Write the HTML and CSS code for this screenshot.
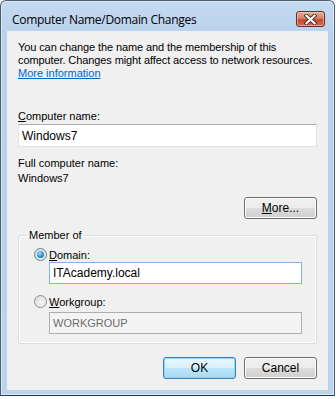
FILE: index.html
```html
<!DOCTYPE html>
<html lang="en">
<head>
    <meta charset="utf-8">
    <title>Computer Name/Domain Changes</title>
    <link rel="stylesheet" href="styles.css">
</head>
<body>
    <div class="window">
        <div class="titlebar">
            <span class="title">Computer Name/Domain Changes</span>
            <span class="close-btn">
                <svg width="13" height="11" viewBox="0 0 13 11">
                    <path d="M2.5 1.8 L10.5 9.2 M10.5 1.8 L2.5 9.2" stroke="#4a2a2a" stroke-width="4" stroke-linecap="square"/>
                    <path d="M2.5 1.8 L10.5 9.2 M10.5 1.8 L2.5 9.2" stroke="#ffffff" stroke-width="2.2" stroke-linecap="square"/>
                </svg>
            </span>
        </div>
        <div class="frame">
            <div class="content">
                <p class="intro">You can change the name and the membership of this<br>computer. Changes might affect access to network resources.<br><a href="#">More information</a></p>

                <label class="field-label" for="computer-name"><u>C</u>omputer name:</label>
                <input type="text" id="computer-name" class="textbox" value="Windows7">

                <div class="static full-name-label">Full computer name:</div>
                <div class="static full-name">Windows7</div>

                <div class="button-row more-row">
                    <button class="btn"><u>M</u>ore...</button>
                </div>

                <fieldset class="group">
                    <legend>Member of</legend>
                    <div class="radio-row domain-row">
                        <span class="radio checked"></span>
                        <span><u>D</u>omain:</span>
                    </div>
                    <input type="text" class="textbox indent focused" value="ITAcademy.local">
                    <div class="radio-row workgroup-row">
                        <span class="radio"></span>
                        <span><u>W</u>orkgroup:</span>
                    </div>
                    <input type="text" class="textbox indent disabled-box" value="WORKGROUP" disabled>
                </fieldset>

                <div class="button-row actions">
                    <button class="btn default">OK</button>
                    <button class="btn">Cancel</button>
                </div>
            </div>
        </div>
    </div>
</body>
</html>
```

FILE: styles.css
```css
/* --- dialog chrome --- */
body {
    margin: 0;
    background: #ffffff;
    font-family: "Liberation Sans", Arial, sans-serif;
    font-size: 11px;
    color: #000000;
}

.window {
    width: 335px;
    height: 396px;
    box-sizing: border-box;
    border: 1px solid #4e5d6c;
    border-radius: 6px 6px 0 0;
    background: linear-gradient(#c4daf1, #b8d0ea 40px, #bcd3eb);
    box-shadow: inset 0 0 0 1px rgba(255, 255, 255, 0.45);
    border-bottom-color: #2a3a48;
}

.titlebar { height: 30px; display: flex; align-items: flex-start; }
.title { font-family: "Open Sans", "Noto Sans", sans-serif; font-size: 12px; letter-spacing: -0.3px; line-height: 16px; margin: 11px 0 0 11px; color: #000; }
.close-btn {
    margin: 10px 9px 0 auto;
    width: 29px; height: 16px;
    box-sizing: border-box;
    border: 1px solid #6b2a22;
    border-radius: 3px;
    background: linear-gradient(#e9a995, #d7816b 45%, #c24a32 55%, #d06f55);
    box-shadow: inset 0 0 0 1px rgba(255, 220, 210, 0.5);
    display: flex; align-items: center; justify-content: center;
}

.frame { padding: 0 6px 5px 6px; }

.content {
    height: 359px;
    box-sizing: border-box;
    background: #f0f0f0;
    padding: 10px 11px 0 11px;
}

/* --- text --- */
.intro { margin: 0; line-height: 13px; white-space: nowrap; letter-spacing: -0.1px; }
.intro a { color: #0066cc; letter-spacing: 0; }

.field-label, .static { display: block; line-height: 13px; }
.field-label { margin-top: 30px; }
.full-name-label { margin-top: 10px; }
.full-name { margin-top: 2px; }

/* --- text boxes --- */
.textbox {
    display: block;
    box-sizing: border-box;
    width: 299px;
    height: 23px;
    margin: 1px 0 0 0;
    padding: 0 3px;
    border: 1px solid #e2e3ea;
    border-top-color: #abadb3;
    background: #ffffff;
    font-family: inherit;
    font-size: 12px;
    color: #000;
    outline: none;
}
.textbox.indent { width: 253px; height: 22px; margin-left: 30px; }
.textbox.focused { border-color: #7eb4ea; }
.disabled-box { margin-top: 4px; border-color: #afafaf; background: #f4f4f4; color: #6d6d6d; font-size: 11px; }

/* --- buttons --- */
.button-row { display: flex; justify-content: flex-end; gap: 8px; }
.more-row { margin-top: 12px; }
.actions { margin-top: 13px; }

.btn {
    width: 73px; height: 22px;
    box-sizing: border-box;
    border: 1px solid #707070;
    border-radius: 3px;
    background: linear-gradient(#f2f2f2, #ebebeb 50%, #dddddd 50%, #cfcfcf);
    box-shadow: inset 0 0 0 1px #fcfcfc;
    font-family: inherit;
    font-size: 12px;
    color: #000;
    padding: 0;
}
.btn.default {
    border-color: #3c7fb1;
    background: linear-gradient(#eaf6fd, #d9f0fc 50%, #bee6fd 50%, #a7d9f5);
    box-shadow: inset 0 0 0 1px #94d5f8;
}

/* --- group box --- */
.group {
    margin: 10px 0 0 0;
    padding: 0 0 9px 0;
    border: 1px solid #d5dfe5;
    border-radius: 3px;
    box-shadow: inset 0 0 0 1px #ffffff;
}
.group legend { margin-left: 8px; padding: 0 2px; line-height: 13px; }

.radio-row { display: flex; align-items: center; gap: 2px; height: 13px; margin-left: 15px; }
.domain-row { margin-top: 6px; }
.workgroup-row { margin-top: 11px; }

.radio {
    width: 13px; height: 13px;
    box-sizing: border-box;
    border-radius: 50%;
    border: 1px solid #8e8f8f;
    background: radial-gradient(circle at 60% 65%, #f4f4f4, #d8d8d8);
    position: relative;
}
.radio.checked { border-color: #5a7fa0; }
.radio.checked::after {
    content: '';
    position: absolute;
    left: 2px; top: 2px;
    width: 7px; height: 7px;
    border-radius: 50%;
    background: radial-gradient(circle at 40% 35%, #a9e2ff, #1c88c8 60%, #0d5b96);
}
```
